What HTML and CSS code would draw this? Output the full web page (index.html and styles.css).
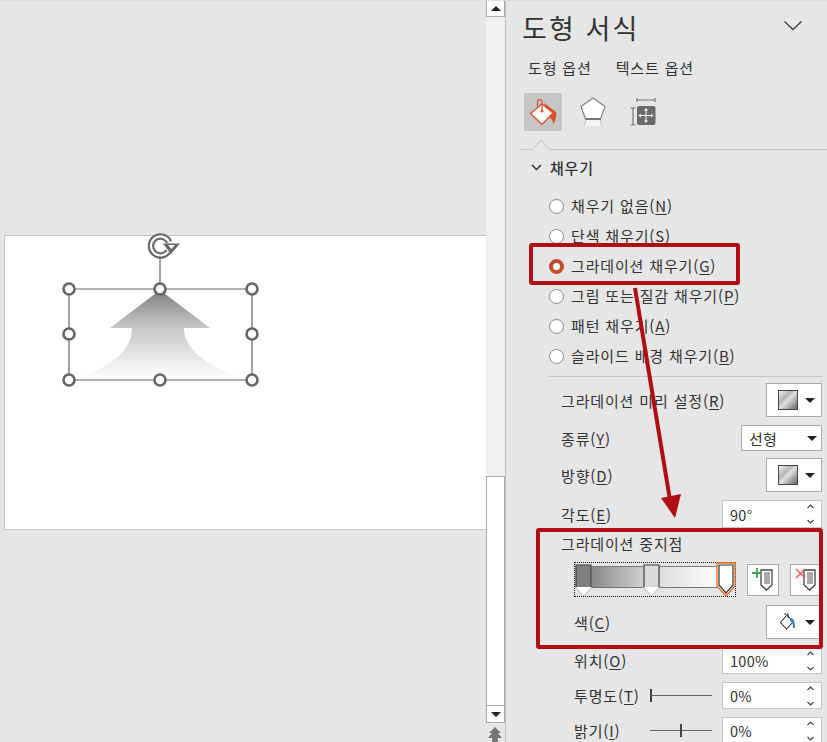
FILE: index.html
```html
<!DOCTYPE html>
<html lang="ko">
<head>
<meta charset="utf-8">
<title>도형 서식</title>
<link rel="stylesheet" href="styles.css">
</head>
<body>
<div class="app">
  <main class="canvas">
    <div class="slide"></div>
    <svg class="selection" width="486" height="742" viewBox="0 0 486 742">
      <defs>
        <linearGradient id="shapeFill" x1="0" y1="0" x2="0" y2="1">
          <stop offset="0" stop-color="#7f7f7f"/>
          <stop offset="0.4" stop-color="#c4c4c4"/>
          <stop offset="1" stop-color="#ffffff"/>
        </linearGradient>
      </defs>
      <path d="M160 290L210 328H184C184 352 212 368 245 379H75C108 368 132 352 132 328H110Z" fill="url(#shapeFill)"/>
      <path d="M160 258V289M69 289H252V380H69Z" fill="none" stroke="#666" stroke-width="1.2"/>
      <g fill="#fff" stroke="#666" stroke-width="2.6">
        <circle cx="69" cy="289" r="5.5"/><circle cx="160" cy="289" r="5.5"/><circle cx="252" cy="289" r="5.5"/>
        <circle cx="69" cy="334" r="5.5"/><circle cx="252" cy="334" r="5.5"/>
        <circle cx="69" cy="380" r="5.5"/><circle cx="160" cy="380" r="5.5"/><circle cx="252" cy="380" r="5.5"/>
      </g>
      <path d="M168.300 251.400A9.500 9.500 0 1 1 169.100 242" fill="none" stroke="#666" stroke-width="6.400"/>
      <path d="M168.300 251.400A9.500 9.500 0 1 1 169.100 242" fill="none" stroke="#fff" stroke-width="2.200"/>
      <path d="M163 243.500H180L171 254Z" fill="#666"/>
      <path d="M168 245H175L171.500 249Z" fill="#fff"/>
    </svg>
  </main>

  <div class="scrollbar">
    <div class="sb-btn"><span class="tri-up"></span></div>
    <div class="sb-thumb"></div>
    <div class="sb-btn sb-down"><span class="tri-down"></span></div>
    <svg class="sb-prev" width="16" height="16" viewBox="0 0 16 16"><path d="M8 0L14 6H11L15 11H11V16H5V11H1L5 6H2Z" fill="#777"/></svg>
  </div>

  <aside class="panel">
    <header class="title-row">
      <h1 class="title">도형 서식</h1>
      <svg class="title-chevron" width="20" height="12" viewBox="0 0 20 12"><path d="M1.500 1.500L10 9.500L18.500 1.500" fill="none" stroke="#444" stroke-width="1.300"/></svg>
    </header>
    <nav class="tabs"><span>도형 옵션</span><span>텍스트 옵션</span></nav>
    <div class="icons">
      <div class="icon-btn is-active">
        <svg width="30" height="30" viewBox="0 0 30 30">
          <path d="M16 6L28 15C29 19 27 24 25.500 27C25 23 23 21 21 21L16 6Z" fill="#d9502c"/>
          <path d="M14 7L25 16L14 27.500L2.500 16.500Z" fill="#fff" stroke="#d9502c" stroke-width="1.300"/>
          <path d="M14 14V4A2.500 2.500 0 0 0 9.500 4V10" fill="none" stroke="#d9502c" stroke-width="1.200"/>
          <circle cx="14" cy="14" r="1.500" fill="#d9502c"/>
        </svg>
      </div>
      <div class="icon-btn">
        <svg width="30" height="32" viewBox="0 0 30 32">
          <path d="M15 2L27 10.500L22.500 23H7.500L3 10.500Z" fill="#fff" stroke="#8a8a8a" stroke-width="1.300"/>
          <path d="M7.500 23H22.500" stroke="#777" stroke-width="2"/>
          <path d="M6 30L8 24H22L24 30" fill="#f3f3f3" stroke="none"/>
          <path d="M8 24L6 30M22 24L24 30" stroke="#c4c4c4" stroke-width="1"/>
        </svg>
      </div>
      <div class="icon-btn">
        <svg width="30" height="30" viewBox="0 0 30 30">
          <path d="M9 3H27M9 1V5M27 1V5M2.500 11H7.500M5 11V28M2.500 28H7.500" fill="none" stroke="#777" stroke-width="1.200"/>
          <rect x="9" y="9" width="18.500" height="19" rx="2" fill="#6a6a6a"/>
          <path d="M18 12V25M11.500 18.500H24.500" stroke="#fff" stroke-width="1"/>
          <path d="M18 11L16 13.500H20ZM18 26L16 23.500H20ZM10.500 18.500L13 16.500V20.500ZM25.500 18.500L23 16.500V20.500Z" fill="#fff"/>
        </svg>
      </div>
    </div>
    <div class="tab-rule">
      <svg class="tab-notch" width="20" height="11" viewBox="0 0 20 11"><path d="M1 11L10 1L19 11" fill="#e6e6e6" stroke="#c6c6c6"/></svg>
    </div>
    <div class="section-head">
      <svg width="11" height="7" viewBox="0 0 11 7"><path d="M1 1L5.500 5.500L10 1" fill="none" stroke="#333" stroke-width="1.500"/></svg>
      <strong>채우기</strong>
    </div>

    <ul class="radios">
      <li class="radio"><i class="dot"></i><span>채우기 없음(<u>N</u>)</span></li>
      <li class="radio"><i class="dot"></i><span>단색 채우기(<u>S</u>)</span></li>
      <li class="radio"><i class="dot is-on"></i><span>그라데이션 채우기(<u>G</u>)</span></li>
      <li class="radio"><i class="dot"></i><span>그림 또는 질감 채우기(<u>P</u>)</span></li>
      <li class="radio"><i class="dot"></i><span>패턴 채우기(<u>A</u>)</span></li>
      <li class="radio"><i class="dot"></i><span>슬라이드 배경 채우기(<u>B</u>)</span></li>
    </ul>
    <hr class="rule">

    <div class="row row-preset">
      <span>그라데이션 미리 설정(<u>R</u>)</span>
      <div class="box btn-drop"><i class="swatch"></i><span class="tri-down"></span></div>
    </div>
    <div class="row row-type">
      <span>종류(<u>Y</u>)</span>
      <div class="box select"><span>선형</span><span class="tri-down"></span></div>
    </div>
    <div class="row row-dir">
      <span>방향(<u>D</u>)</span>
      <div class="box btn-drop"><i class="swatch"></i><span class="tri-down"></span></div>
    </div>
    <div class="row row-angle">
      <span>각도(<u>E</u>)</span>
      <div class="box spin"><span>90°</span><svg class="spin-arrows" width="9" height="24" viewBox="0 0 9 24"><path d="M1.500 6L4.500 3L7.500 6M1.500 18L4.500 21L7.500 18" fill="none" stroke="#444" stroke-width="1.100"/></svg></div>
    </div>
    <div class="stops-label">그라데이션 중지점</div>
    <div class="stops-row">
      <div class="stops">
        <div class="stops-bar"></div>
        <svg class="stop stop-a" width="17" height="33" viewBox="0 0 17 33">
          <path d="M1 1H16V24L8.500 32L1 24Z" fill="#fff" stroke="#bbb"/>
          <rect x="1" y="1" width="15" height="22" fill="#7f7f7f"/>
          <path d="M1 23V1H16V23" fill="none" stroke="#444" stroke-width="1.200"/>
        </svg>
        <svg class="stop stop-b" width="17" height="33" viewBox="0 0 17 33">
          <path d="M1 1H16V24L8.500 32L1 24Z" fill="#fff" stroke="#bbb"/>
          <rect x="1" y="1" width="15" height="22" fill="#d9d9d9"/>
          <path d="M1 23V1H16V23" fill="none" stroke="#444" stroke-width="1.200"/>
        </svg>
        <svg class="stop stop-c" width="20" height="35" viewBox="0 0 20 35">
          <path d="M1 1H19V24L10 34L1 24Z" fill="#fff" stroke="#e8701f" stroke-width="1.300"/>
          <path d="M3 3H17V23L10 31L3 23Z" fill="#fff" stroke="#333" stroke-width="1.200"/>
        </svg>
      </div>
      <div class="box stop-btn stop-add">
        <svg width="24" height="26" viewBox="0 0 24 26">
          <path d="M10 3H21V18L15.500 23L10 18Z" fill="#fff" stroke="#444" stroke-width="1.300"/>
          <rect x="13" y="5" width="6" height="12" fill="#a9a9a9"/>
          <path d="M6 1V11M1 6H11" stroke="#3aa35c" stroke-width="1.800"/>
        </svg>
      </div>
      <div class="box stop-btn stop-del">
        <svg width="24" height="26" viewBox="0 0 24 26">
          <path d="M10 3H21V18L15.500 23L10 18Z" fill="#fff" stroke="#444" stroke-width="1.300"/>
          <rect x="13" y="5" width="6" height="12" fill="#a9a9a9"/>
          <path d="M2 2L11 11M11 2L2 11" stroke="#ea5a63" stroke-width="1.500"/>
        </svg>
      </div>
    </div>
    <div class="row row-color">
      <span>색(<u>C</u>)</span>
      <div class="box btn-drop">
        <svg width="20" height="18" viewBox="0 0 18 18">
          <path d="M8 2L14 9L7.500 16L1.500 9.500Z" fill="#fff" stroke="#333" stroke-width="1.100"/>
          <path d="M6 2V1A1.500 1.500 0 0 1 9 1V5" fill="none" stroke="#333"/>
          <path d="M11 5C15 5 16 9 16 15H14C14 12 14 9 11 8Z" fill="#2f7fc4"/>
        </svg>
        <span class="tri-down"></span>
      </div>
    </div>
    <div class="row row-pos">
      <span>위치(<u>O</u>)</span>
      <div class="box spin"><span>100%</span><svg class="spin-arrows" width="9" height="24" viewBox="0 0 9 24"><path d="M1.500 6L4.500 3L7.500 6M1.500 18L4.500 21L7.500 18" fill="none" stroke="#444" stroke-width="1.100"/></svg></div>
    </div>
    <div class="row row-pos row-slide">
      <span class="slide-label">투명도(<u>T</u>)</span>
      <div class="slider"><i class="tick tick-start"></i></div>
      <div class="box spin"><span>0%</span><svg class="spin-arrows" width="9" height="24" viewBox="0 0 9 24"><path d="M1.500 6L4.500 3L7.500 6M1.500 18L4.500 21L7.500 18" fill="none" stroke="#444" stroke-width="1.100"/></svg></div>
    </div>
    <div class="row row-pos row-slide">
      <span class="slide-label">밝기(<u>I</u>)</span>
      <div class="slider"><i class="tick tick-mid"></i></div>
      <div class="box spin"><span>0%</span><svg class="spin-arrows" width="9" height="24" viewBox="0 0 9 24"><path d="M1.500 6L4.500 3L7.500 6M1.500 18L4.500 21L7.500 18" fill="none" stroke="#444" stroke-width="1.100"/></svg></div>
    </div>
  </aside>

  <svg class="annotations" width="827" height="742" viewBox="0 0 827 742">
    <rect x="531" y="245" width="207" height="38" fill="none" stroke="#b10e14" stroke-width="4" rx="1"/>
    <rect x="538" y="530" width="283" height="117" fill="none" stroke="#b10e14" stroke-width="4" rx="1"/>
    <path d="M635 288L670 500" stroke="#b10e14" stroke-width="4"/>
    <path d="M661 498L681 494L675 518Z" fill="#b10e14"/>
  </svg>
</div>
</body>
</html>
```

FILE: styles.css
```css
* { box-sizing: border-box; }
html, body { margin: 0; height: 100%; overflow: hidden; }
body {
  background: #e6e6e6;
  color: #333;
  font-family: "Noto Sans CJK KR", "Noto Sans", sans-serif;
  font-size: 14px;
}
i { display: block; }
u { text-underline-offset: 2px; text-decoration-thickness: 1px; }

.app { position: relative; display: flex; width: 827px; height: 742px; overflow: hidden; border-top: 1px solid #dedede; }

.canvas { position: relative; width: 486px; flex: none; padding: 234px 0 0 4px; }
.slide { height: 295px; background: #fff; border: 1px solid #c6c6c6; border-right: 0; }
.selection { position: absolute; left: 0; top: -1px; }

.scrollbar { position: relative; width: 20px; flex: none; background: #f1f1f1; border-right: 1px solid #bdbdbd; margin-right: 1px; }
.sb-btn { position: relative; z-index: 1; display: flex; align-items: center; justify-content: center; width: 19px; height: 17px; background: #fff; border: 1px solid #ababab; margin-top: -1px; }
.sb-thumb { position: absolute; left: 0; top: 475px; width: 19px; height: 230px; background: #fff; border: 1px solid #ababab; }
.sb-down { position: absolute; left: 0; top: 704px; margin: 0; height: 18px; }
.sb-prev { position: absolute; left: 1px; top: 726px; z-index: 1; }
.scrollbar::after { content: ""; position: absolute; left: 0; top: 723px; width: 19px; height: 19px; background: #e6e6e6; }

.tri-up, .tri-down { display: block; width: 0; height: 0; border-left: 5px solid transparent; border-right: 5px solid transparent; }
.tri-up { border-bottom: 5px solid #222; }
.tri-down { border-top: 5px solid #222; }

.panel { flex: none; width: 320px; height: 741px; overflow: hidden; }
.title-row { display: flex; align-items: center; justify-content: space-between; height: 55px; padding: 0 24px 3px 15px; }
.title { margin: 0; font-size: 27px; font-weight: 400; color: #333; letter-spacing: 2.100px; }
.title-chevron { margin-bottom: 2px; }
.tabs { display: flex; gap: 24px; height: 24px; align-items: center; padding: 0 0 2px 21px; font-size: 15px; letter-spacing: .85px; }
.icons { display: flex; gap: 12px; margin-top: 13px; padding-left: 17px; }
.icon-btn { display: flex; align-items: center; justify-content: center; width: 38px; height: 38px; }
.is-active { background: #c6c6c6; }
.tab-rule { position: relative; height: 19px; margin-left: 14px; border-bottom: 1px solid #c6c6c6; }
.tab-notch { position: absolute; left: 10px; bottom: -1px; }
.section-head { display: flex; align-items: center; gap: 8px; height: 36px; padding: 0 0 1px 24px; }
.section-head strong { font-weight: 500; color: #333; font-size: 15px; letter-spacing: .8px; }

.radios { list-style: none; margin: 5px 0 0; padding: 0 0 0 42px; }
.radio { display: flex; align-items: center; gap: 7px; height: 30px; font-size: 15px; letter-spacing: .85px; }
.radio span { padding-bottom: 2px; }
.dot { width: 15px; height: 15px; border-radius: 50%; background: #fff; border: 1.500px solid #8c8c8c; }
.dot.is-on { border: 4px solid #c0502d; }
.rule { height: 1px; margin: 5px 5px 0 42px; background: #c6c6c6; border: 0; }

.row { display: flex; align-items: center; justify-content: space-between; padding: 0 5px 0 54px; font-size: 15px; letter-spacing: .85px; }
.box { display: flex; align-items: center; background: #fff; border: 1px solid #ababab; letter-spacing: .3px; }
.btn-drop { width: 56px; height: 34px; padding-left: 11px; gap: 7px; }
.swatch { width: 20px; height: 20px; border: 1px solid #444; background: linear-gradient(135deg, #f0f0f0 0%, #b4b4b4 35%, #e0e0e0 50%, #666 100%); }
.select { width: 81px; height: 26px; justify-content: space-between; padding: 0 4px 0 7px; }
.spin { width: 100px; height: 28px; justify-content: space-between; padding: 0 6px 0 7px; font-size: 14.500px; border-color: #c6c6c6; }
.row-preset { height: 34px; margin-top: 6px; }
.row-type { height: 26px; margin-top: 8px; }
.row-dir { height: 34px; margin-top: 7px; }
.row-angle { height: 28px; margin-top: 8px; }
.stops-label { height: 26px; line-height: 25px; margin-top: 3px; padding-left: 54px; font-size: 15px; letter-spacing: .85px; }
.stops-row { display: flex; align-items: flex-start; height: 35px; margin-top: 5px; padding-left: 67px; }
.stops { position: relative; flex: none; width: 162px; height: 35px; border: 1px dotted #111; }
.stops-bar { position: absolute; left: 8px; top: 3px; width: 150px; height: 22px; border: 1px solid #777; background: linear-gradient(90deg, #7f7f7f, #d9d9d9 45%, #fff 92%); }
.stop { position: absolute; top: 1px; }
.stop-a { left: 0; }
.stop-b { left: 68px; }
.stop-c { left: 141px; top: -1px; }
.stop-btn { flex: none; justify-content: center; width: 32px; height: 32px; margin-top: 2px; }
.stop-add { margin-left: 11px; }
.stop-del { margin-left: 11px; }
.row-color { height: 34px; margin-top: 8px; padding-left: 67px; }
.row-pos { height: 27px; margin-top: 8px; padding-left: 67px; }
.row-pos .spin { height: 27px; }
.row-slide { justify-content: flex-start; }
.slide-label { width: 76px; flex: none; }
.slider { position: relative; flex: none; width: 62px; height: 1px; margin-right: 10px; background: #666; }
.tick { position: absolute; top: -6px; width: 2px; height: 13px; background: #444; }
.tick-start { left: 0; }
.tick-mid { left: 30px; }
.row-slide .box { flex: none; }

.annotations { position: absolute; left: 0; top: -1px; pointer-events: none; }
```
